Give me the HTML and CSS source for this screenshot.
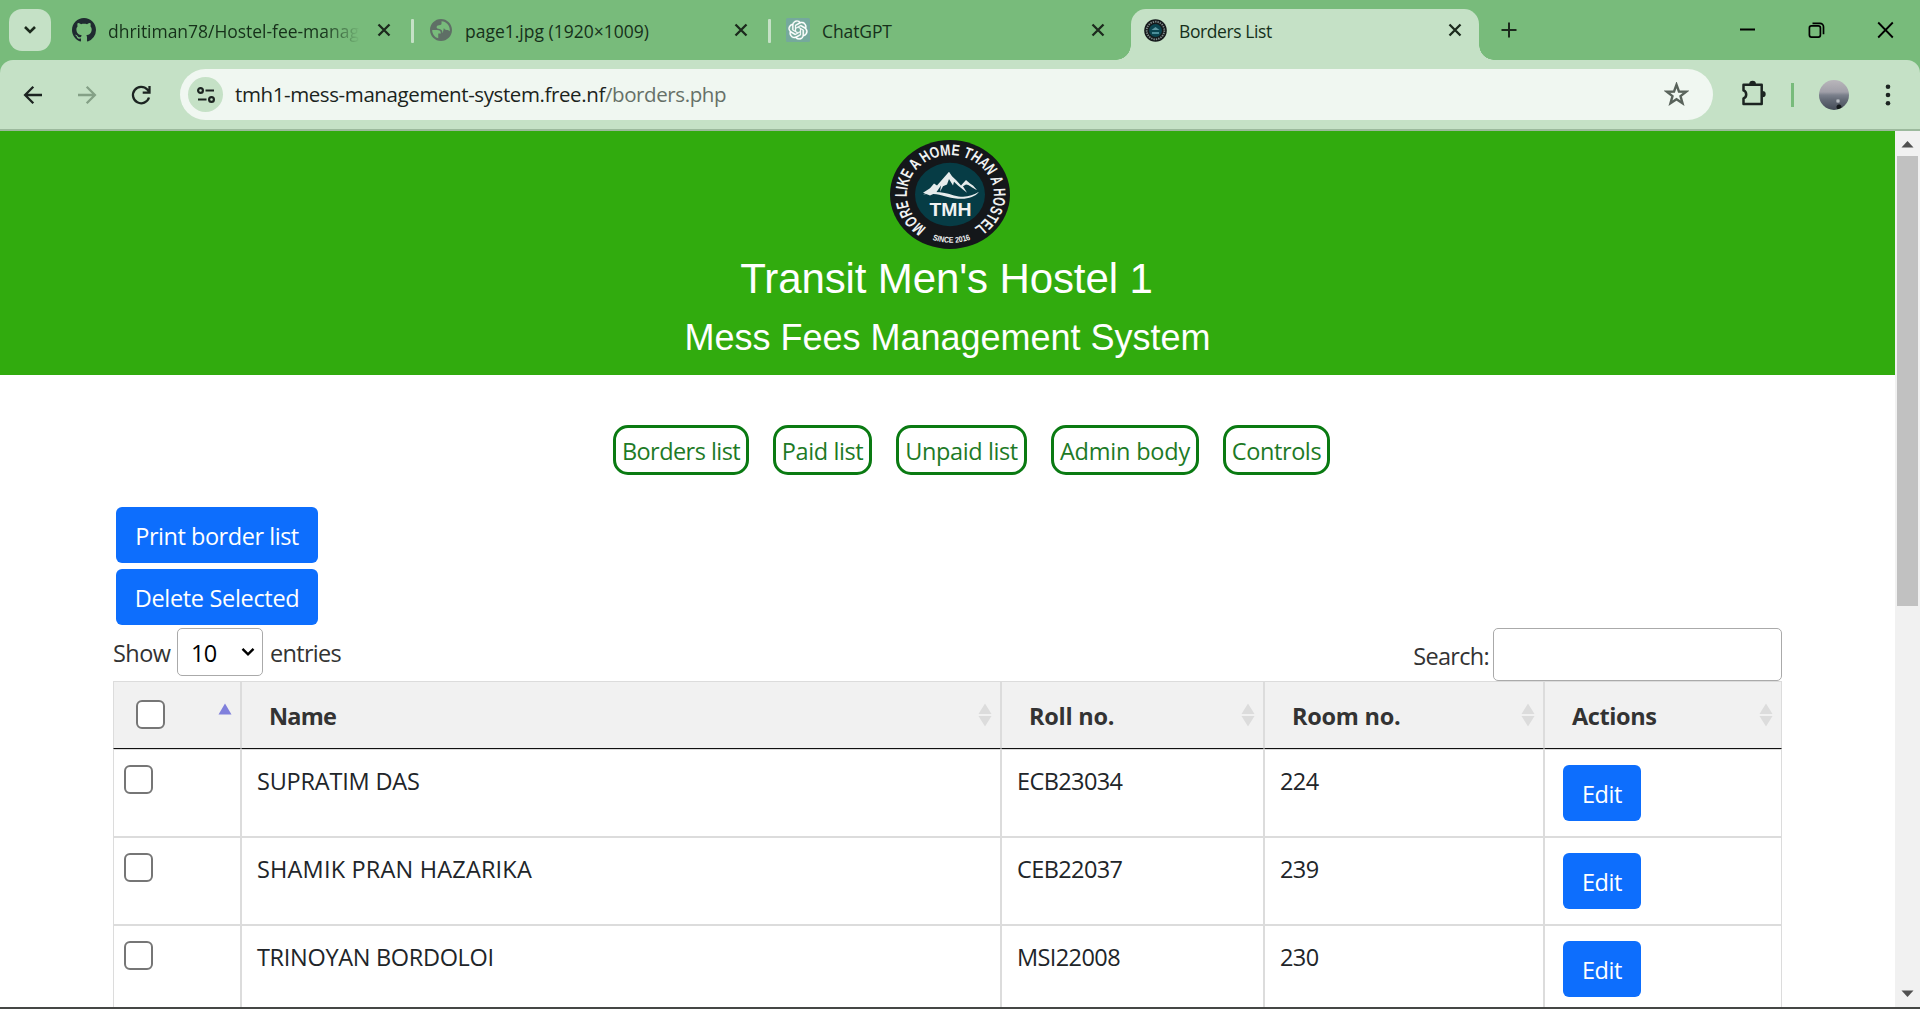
FILE: index.html
```html
<!DOCTYPE html>
<html lang="en">
<head>
<meta charset="utf-8">
<title>Borders List</title>
<link rel="stylesheet" href="styles.css">
</head>
<body>
<svg class="defs" aria-hidden="true">
  <symbol id="x" viewBox="0 0 24 24"><path d="M6.500 6.500l11 11M17.500 6.500l-11 11" fill="none" stroke="currentColor" stroke-width="2.300"/></symbol>
  <symbol id="sort" viewBox="0 0 14 24"><path d="M7 .5L13.500 11H.5zM7 23.500L13.500 13H.5z" fill="#dcdcdc"/></symbol>
</svg>

<header class="strip">
  <button class="tab-search" aria-label="Search tabs"><svg width="14" height="10" viewBox="0 0 14 10"><path d="M2 2l5 5 5-5" fill="none" stroke="#1c2a1d" stroke-width="2.600"/></svg></button>
  <div class="tab tab-github">
    <svg width="24" height="24" viewBox="0 0 16 16"><path fill="#1f2a30" d="M8 0C3.580 0 0 3.580 0 8c0 3.540 2.290 6.530 5.470 7.590.4.070.55-.17.55-.38 0-.19-.01-.82-.01-1.490-2.010.37-2.530-.49-2.690-.94-.09-.23-.48-.94-.82-1.130-.28-.15-.68-.52-.01-.53.63-.01 1.080.58 1.230.82.72 1.210 1.870.87 2.330.66.070-.52.280-.87.510-1.070-1.780-.2-3.640-.89-3.640-3.950 0-.87.310-1.590.820-2.150-.08-.2-.36-1.020.080-2.120 0 0 .67-.21 2.200.820.640-.18 1.320-.27 2-.27s1.360.090 2 .27c1.530-1.040 2.200-.82 2.200-.82.440 1.100.160 1.920.080 2.120.510.560.820 1.270.820 2.150 0 3.070-1.870 3.750-3.650 3.950.290.250.540.730.540 1.480 0 1.070-.01 1.930-.01 2.200 0 .210.150.460.550.380A8.010 8.010 0 0 0 16 8c0-4.420-3.580-8-8-8z"/></svg>
    <span class="tab-title faded">dhritiman78/Hostel-fee-manag</span>
    <svg class="close"><use href="#x"/></svg>
  </div>
  <i class="sep"></i>
  <div class="tab tab-image">
    <svg width="22" height="22" viewBox="2 2 20 20"><path fill="#5f6f66" d="M12 2C6.480 2 2 6.480 2 12s4.480 10 10 10 10-4.480 10-10S17.520 2 12 2zM4 12h4.400c2.300 0 3.400.9 3.500 3.100H9.500v4.500C6.200 18.600 4 15.600 4 12zm8.500 7.900c.4-1 .8-1.700 1.800-1.900.9-.2 1.200-.9 1-1.800-.2-1-.9-1.700-2-1.700 0-2-.8-3.300-2.700-3.500-1.400-.2-2.600-.1-2.600-1.400 0-1.200.8-1.900 2.200-1.900 1.500 0 2.300-.5 2.300-1.800V4.100C16.800 4.300 20 7.800 20 12c0 .4 0 .8-.1 1.200-.8-.9-1.600-1.300-2.700-1.300-1.300 0-2-.6-2.600-1.700"/></svg>
    <span class="tab-title">page1.jpg (1920×1009)</span>
    <svg class="close"><use href="#x"/></svg>
  </div>
  <i class="sep"></i>
  <div class="tab tab-chat">
    <svg width="24" height="24" viewBox="-3 -3 30 30"><rect x="-3" y="-3" width="30" height="30" rx="2" fill="#75a99c"/><path fill="#fff" stroke="#fff" stroke-width=".4" d="M22.2819 9.8211a5.9847 5.9847 0 0 0-.5157-4.9108 6.0462 6.0462 0 0 0-6.5098-2.9A6.0651 6.0651 0 0 0 4.9807 4.1818a5.9847 5.9847 0 0 0-3.9977 2.9 6.0462 6.0462 0 0 0 .7427 7.0966 5.98 5.98 0 0 0 .511 4.9107 6.051 6.051 0 0 0 6.5146 2.9001A5.9847 5.9847 0 0 0 13.2599 24a6.0557 6.0557 0 0 0 5.7718-4.2058 5.9894 5.9894 0 0 0 3.9977-2.9001 6.0557 6.0557 0 0 0-.7475-7.0729zm-9.022 12.6081a4.4755 4.4755 0 0 1-2.8764-1.0408l.1419-.0804 4.7783-2.7582a.7948.7948 0 0 0 .3927-.6813v-6.7369l2.02 1.1686a.071.071 0 0 1 .038.052v5.5826a4.504 4.504 0 0 1-4.4945 4.4944zm-9.6607-4.1254a4.4708 4.4708 0 0 1-.5346-3.0137l.142.0852 4.783 2.7582a.7712.7712 0 0 0 .7806 0l5.8428-3.3685v2.3324a.0804.0804 0 0 1-.0332.0615L9.74 19.9502a4.4992 4.4992 0 0 1-6.1408-1.6464zM2.3408 7.8956a4.485 4.485 0 0 1 2.3655-1.9728V11.6a.7664.7664 0 0 0 .3879.6765l5.8144 3.3543-2.0201 1.1685a.0757.0757 0 0 1-.071 0l-4.8303-2.7865A4.504 4.504 0 0 1 2.3408 7.872zm16.5963 3.8558L13.1038 8.364 15.1192 7.2a.0757.0757 0 0 1 .071 0l4.8303 2.7913a4.4944 4.4944 0 0 1-.6765 8.1042v-5.6772a.79.79 0 0 0-.407-.667zm2.0107-3.0231l-.142-.0852-4.7735-2.7818a.7759.7759 0 0 0-.7854 0L9.409 9.2297V6.8974a.0662.0662 0 0 1 .0284-.0615l4.8303-2.7866a4.4992 4.4992 0 0 1 6.6802 4.66zM8.3065 12.863l-2.02-1.1638a.0804.0804 0 0 1-.038-.0567V6.0742a4.4992 4.4992 0 0 1 7.3757-3.4537l-.142.0805L8.704 5.459a.7948.7948 0 0 0-.3927.6813zm1.0976-2.3654l2.602-1.4998 2.6069 1.4998v2.9994l-2.5974 1.4997-2.6067-1.4997Z"/></svg>
    <span class="tab-title">ChatGPT</span>
    <svg class="close"><use href="#x"/></svg>
  </div>
  <div class="tab tab-active">
    <svg width="23" height="23" viewBox="0 0 23 23"><circle cx="11.500" cy="11.500" r="11.300" fill="#15191b"/><circle cx="11.500" cy="11.500" r="8.800" fill="none" stroke="#7f8a8a" stroke-width="1.800" stroke-dasharray="1.400 1"/><circle cx="11.500" cy="11.500" r="6.500" fill="#0b4550"/><path d="M7.500 11l4-3 4 3z" fill="#5d98a2"/><path d="M8 14h7" stroke="#4b8d99" stroke-width="2"/></svg>
    <span class="tab-title">Borders List</span>
    <svg class="close"><use href="#x"/></svg>
  </div>
  <svg class="new-tab" width="24" height="24" viewBox="0 0 24 24"><path d="M12 4.500v15M4.500 12h15" stroke="#1c2a1d" stroke-width="2"/></svg>
  <div class="win">
    <svg viewBox="0 0 24 24"><path d="M4.500 11.500h15" stroke="#000" stroke-width="2"/></svg>
    <svg viewBox="0 0 24 24"><g fill="none" stroke="#000" stroke-width="1.700"><rect x="4.900" y="7.900" width="11" height="11.200" rx="2"/><path d="M8 5.300h7.500a3.500 3.500 0 0 1 3.500 3.500v7.500"/></g></svg>
    <svg viewBox="0 0 24 24"><path d="M4.700 4.500l14.600 15M19.300 4.500l-14.600 15" stroke="#000" stroke-width="1.800"/></svg>
  </div>
</header>

<div class="toolbar-bg">
<nav class="toolbar">
  <svg class="back" viewBox="0 0 24 24"><path d="M21 12H4.500M12.300 3.800L4.100 12l8.200 8.200" fill="none" stroke="#1c2421" stroke-width="2.300"/></svg>
  <svg class="forward" viewBox="0 0 24 24"><path d="M3 12h16.500M11.700 3.800l8.200 8.200-8.200 8.200" fill="none" stroke="#84a086" stroke-width="2.300"/></svg>
  <svg class="reload" viewBox="0 0 24 24"><path d="M20 14.500A8.200 8.200 0 1 1 18.300 6.600l2 2.200M20.500 3v6.700h-6.800" fill="none" stroke="#1c2421" stroke-width="2.300"/></svg>
  <div class="omnibox">
    <span class="site"><svg width="20" height="20" viewBox="0 0 20 20"><g fill="none" stroke="#1c2421" stroke-width="2.200"><circle cx="4.500" cy="5.500" r="2.400"/><path d="M9.500 5.500H18M2 14.500h8.500"/><circle cx="15.500" cy="14.500" r="2.400"/></g></svg></span>
    <span class="url">tmh1-mess-management-system.free.nf<em>/borders.php</em></span>
    <svg class="star" viewBox="0 0 24 24"><path d="M12 2.600l2.350 6.500 6.900.2-5.400 4.300 1.900 6.700L12 16.450 6.250 20.300l1.900-6.700-5.400-4.300 6.900-.2z" fill="none" stroke="#59635b" stroke-width="2.300"/></svg>
  </div>
  <svg class="ext" width="27" height="27" viewBox="0 0 27 27"><path d="M3.500 5.800h18.200v19.100H3.500v-5.500c3.600-1.500 3.600-6.500 0-8z" fill="none" stroke="#1c2421" stroke-width="2.500" stroke-linejoin="round"/><path d="M9.300 5a3.300 3.300 0 0 1 6.600 0zM22.500 11.900a3.200 3.200 0 0 1 0 6.400z" fill="#1c2421"/></svg>
  <i class="tool-sep"></i>
  <span class="avatar"></span>
  <svg class="dots" width="6" height="22" viewBox="0 0 6 22"><g fill="#1c2421"><circle cx="3" cy="2.700" r="2.300"/><circle cx="3" cy="11" r="2.300"/><circle cx="3" cy="19.300" r="2.300"/></g></svg>
</nav>
</div>

<div class="view">
  <main class="page">
    <section class="banner">
      <svg class="logo" width="120" height="109" viewBox="0 0 120 120" preserveAspectRatio="none">
        <defs>
          <path id="ring" d="M36.500 96.500A43.400 43.400 0 1 1 82.500 97.500"/>
          <path id="foot" d="M40.500 109A53.500 53.500 0 0 0 83 108.500"/>
        </defs>
        <circle cx="60" cy="60" r="60" fill="#14171a"/>
        <circle cx="60" cy="60" r="35" fill="#063c45"/>
        <text class="ring-text"><textPath href="#ring" textLength="222" lengthAdjust="spacingAndGlyphs">MORE LIKE A HOME THAN A HOSTEL</textPath></text>
        <text class="foot-text"><textPath href="#foot" startOffset="2" textLength="39" lengthAdjust="spacingAndGlyphs">SINCE 2016</textPath></text>
        <path fill="#e6ecec" d="M33 58l7-5 4-5 3 2 12-15 3 5 4 4 5 6 5-6 4 4 3 2 4 5c-5-2-8-6-11-6l-3 2 4 7-9-8-4-4-1 4-4-7-2 6-4 2-3 6 1-7-5 8-6 3z"/>
        <path fill="#e6ecec" d="M33 60c11-5 21-2 31 1s18 1 25-4c-5 7-14 9-25 7s-19-7-31-4z"/>
        <text class="tmh" x="39.500" y="84" textLength="42" lengthAdjust="spacingAndGlyphs">TMH</text>
      </svg>
      <h1>Transit Men's Hostel 1</h1>
      <h2>Mess Fees Management System</h2>
    </section>

    <nav class="links">
      <a>Borders list</a><a>Paid list</a><a>Unpaid list</a><a>Admin body</a><a>Controls</a>
    </nav>

    <section class="content">
      <div class="actions">
        <button class="btn">Print border list</button>
        <button class="btn delete">Delete Selected</button>
      </div>
      <div class="controls">
        <div class="length"><span>Show</span><span class="select">10<svg width="14" height="10" viewBox="0 0 14 10"><path d="M1.500 1.800L7 7.300l5.500-5.500" fill="none" stroke="#000" stroke-width="2.400"/></svg></span><span>entries</span></div>
        <label class="filter"><span>Search:</span><input type="text"></label>
      </div>
      <table>
        <colgroup><col class="c1"><col class="c2"><col class="c3"><col class="c4"><col class="c5"></colgroup>
        <thead>
          <tr>
            <th><div class="head"><i class="check"></i><svg class="asc" width="14" height="12" viewBox="0 0 14 12"><path d="M7 .5L13.500 11.500H.5z" fill="#8080dc"/></svg></div></th>
            <th><div class="head"><span class="name-h">Name</span><svg class="sort"><use href="#sort"/></svg></div></th>
            <th><div class="head"><span>Roll no.</span><svg class="sort"><use href="#sort"/></svg></div></th>
            <th><div class="head"><span>Room no.</span><svg class="sort"><use href="#sort"/></svg></div></th>
            <th><div class="head"><span class="act-h">Actions</span><svg class="sort"><use href="#sort"/></svg></div></th>
          </tr>
        </thead>
        <tbody>
          <tr><td><i class="check"></i></td><td>SUPRATIM DAS</td><td>ECB23034</td><td>224</td><td><button class="btn edit">Edit</button></td></tr>
          <tr><td><i class="check"></i></td><td class="wide">SHAMIK PRAN HAZARIKA</td><td>CEB22037</td><td>239</td><td><button class="btn edit">Edit</button></td></tr>
          <tr><td><i class="check"></i></td><td class="tight">TRINOYAN BORDOLOI</td><td>MSI22008</td><td>230</td><td><button class="btn edit">Edit</button></td></tr>
        </tbody>
      </table>
    </section>
  </main>
  <aside class="scroll">
    <svg width="17" height="10" viewBox="0 0 17 10"><path d="M2.500 8.500L8.500 2l6 6.500z" fill="#505050"/></svg>
    <i class="thumb"></i>
    <svg class="down" width="17" height="10" viewBox="0 0 17 10"><path d="M2.500 1.500h12l-6 6.500z" fill="#505050"/></svg>
  </aside>
</div>
</body>
</html>
```
FILE: styles.css
```css
* { box-sizing: border-box; }
body {
  margin: 0;
  width: 1920px;
  height: 1009px;
  overflow: hidden;
  display: flex;
  flex-direction: column;
  background: #78bb7b;
  font-family: "Open Sans", "Noto Sans", sans-serif;
}
svg { display: block; flex: none; }
button { font: inherit; border: 0; padding: 0; }
.defs { position: absolute; width: 0; height: 0; }

/* tab strip */
.strip { height: 60px; flex: none; display: flex; align-items: flex-start; padding-left: 9px; }
.tab-search {
  width: 42px; height: 42px; margin: 9px 9px 0 0; border-radius: 13px;
  background: #c5e1c6; display: flex; align-items: center; justify-content: center;
}
.tab { height: 60px; display: flex; align-items: center; }
.tab > svg { color: #1c2a1d; }
.tab-title {
  flex: 1; white-space: nowrap;
  font-size: 17.5px; line-height: 26px; color: #16301a; padding-top: 2px;
}
.close { width: 24px; height: 24px; }
.tab-github { width: 351px; padding: 0 15px 0 12px; }
.tab-github .tab-title { margin: 0 12px 0 12px; letter-spacing: -.03px; }
.faded { -webkit-mask-image: linear-gradient(90deg, #000 215px, transparent 252px); mask-image: linear-gradient(90deg, #000 215px, transparent 252px); }
.tab-image { width: 354px; padding: 0 15px 0 16px; }
.tab-image .tab-title { margin-left: 13px; }
.tab-chat { width: 360px; padding: 0 21px 0 15px; }
.tab-chat .tab-title { margin-left: 12px; letter-spacing: -.1px; }
.tab-active {
  position: relative; width: 348px; height: 51px; margin-top: 9px; padding: 0 12px 9px 13px;
  background: #c5e1c6; border-radius: 15px 15px 0 0;
}
.tab-active .tab-title { margin-left: 12px; letter-spacing: -.4px; }
.tab-active::before, .tab-active::after {
  content: ""; position: absolute; bottom: 0; width: 15px; height: 15px;
}
.tab-active::before { left: -15px; background: radial-gradient(circle at 0 0, transparent 14.5px, #c5e1c6 15px); }
.tab-active::after { right: -15px; background: radial-gradient(circle at 100% 0, transparent 14.5px, #c5e1c6 15px); }
.sep { width: 3px; height: 24px; margin-top: 19px; background: #c5e1c6; border-radius: 1px; }
.new-tab { margin: 18px 0 0 18px; }
.win { margin-left: auto; display: flex; }
.win svg { width: 69px; height: 24px; margin-top: 17.500px; }

/* toolbar */
.toolbar-bg { flex: none; height: 71px; background: #78bb7b; border-bottom: 2px solid #9cb99d; }
.toolbar {
  height: 69px; display: flex; align-items: center; padding-left: 21px;
  background: #c5e1c6; border-radius: 13px 13px 0 0;
}
.back, .forward, .reload { width: 24px; height: 24px; }
.forward { margin-left: 30px; }
.reload { margin-left: 30px; }
.omnibox {
  width: 1533px; height: 51px; margin-left: 27px; padding: 0 24px 0 8px;
  border-radius: 26px; background: #f0f7f1; display: flex; align-items: center;
}
.site { width: 35px; height: 35px; border-radius: 50%; background: #c5e1c6; display: flex; align-items: center; justify-content: center; }
.url { flex: 1; margin-left: 12px; font-size: 20.5px; letter-spacing: -.4px; line-height: 30px; padding-bottom: 1px; color: #1b241d; }
.url em { font-style: normal; color: #667068; }
.star { width: 25px; height: 25px; }
.ext { margin: 0 0 4px 27px; }
.tool-sep { width: 3px; height: 24px; margin-left: 24px; background: #78bb7b; }
.avatar {
  width: 30px; height: 30px; margin-left: 25px; border-radius: 50%;
  background:
    radial-gradient(circle at 20px 27px, #14181c 0 2px, transparent 3px),
    radial-gradient(circle at 19px 21px, #b9bdc4 0 1px, transparent 2.500px),
    linear-gradient(#b9b6bb 0, #a09fa8 40%, #7b808c 50%, #666c78 65%, #454c58 100%);
}
.dots { margin-left: 36px; }

/* page */
.view { flex: 1; min-height: 0; display: flex; background: #fff; border-bottom: 2px solid #454745; }
.page { width: 1895px; overflow: hidden; }
.banner {
  height: 244px; background: #31ab0e; color: #fff; display: flex; flex-direction: column; align-items: center;
  font-family: "Liberation Sans", Arial, sans-serif;
}
.logo { margin: 9px 0 0 5px; }
.ring-text, .foot-text, .tmh { fill: #f0f2f2; font-family: "Liberation Sans", Arial, sans-serif; font-weight: 700; }
.ring-text { font-size: 17px; }
.foot-text { font-size: 9px; }
.tmh { font-size: 20px; }
h1, h2 { margin: 0; font-weight: 400; }
h1 { font-size: 42px; line-height: 50px; margin: 5px 2px 0 0; letter-spacing: -.12px; }
h2 { font-size: 36px; line-height: 44px; margin-top: 12px; }

.links { display: flex; gap: 24px; padding: 50px 0 0 613px; }
.links a {
  height: 50px; border: 3px solid #0a7a12; border-radius: 15px; padding-top: 1px;
  display: flex; justify-content: center; color: #1d7a26;
  font-size: 23.500px; line-height: 45px; letter-spacing: -.4px; white-space: nowrap;
}
.links a:nth-child(1) { width: 136px; letter-spacing: -.55px; }
.links a:nth-child(2) { width: 99px; }
.links a:nth-child(3) { width: 131px; }
.links a:nth-child(4) { width: 148px; letter-spacing: -.2px; }
.links a:nth-child(5) { width: 107px; }

.content { width: 1669px; margin: 32px 0 0 113px; color: #333; }
.actions { display: flex; flex-direction: column; gap: 6px; padding-left: 3px; }
.btn {
  width: 202px; height: 56px; border-radius: 6px; padding-top: 2px;
  background: #0d6efd; color: #fff; font-size: 23.500px; line-height: 54px; letter-spacing: -.46px;
}
.delete { letter-spacing: -.32px; }
.edit { width: 78px; letter-spacing: -.4px; display: block; }

.controls { height: 56px; padding-top: 3px; display: flex; justify-content: space-between; font-size: 23.500px; letter-spacing: -.7px; }
.length { display: flex; line-height: 51px; }
.select {
  width: 86px; height: 48px; margin: 0 7px 0 6px; padding: 2px 7px 0 13px; border: 1px solid #aaa; border-radius: 5px;
  display: flex; align-items: center; justify-content: space-between; color: #000;
}
.select svg { margin-bottom: 2px; }
.length > span:first-child { width: 58px; letter-spacing: -.55px; }
.filter { display: flex; line-height: 57px; }
.filter input { width: 289px; height: 53px; margin-left: 4px; border: 1px solid #aaa; border-radius: 5px; background: #fff; }

table { width: 1669px; table-layout: fixed; border-collapse: separate; border-spacing: 0; }
.c1 { width: 128px; }
.c2 { width: 760px; }
.c3 { width: 263px; }
.c4 { width: 280px; }
.c5 { width: 238px; }
th, td { border: 1px solid #dcdcdc; padding: 0; vertical-align: top; text-align: left; }
th { height: 68px; background: #f1f1f1; border-bottom-color: #111; }
.head { display: flex; justify-content: space-between; padding: 18px 8px 0 27px; font-size: 23.500px; line-height: 32px; letter-spacing: -.25px; }
.name-h { letter-spacing: -.8px; }
.act-h { letter-spacing: -.4px; }
.head .check { margin: 0 0 0 -5px; }
.sort { width: 14px; height: 24px; margin-top: 3px; }
.asc { margin-top: 3px; }
td { height: 88px; padding: 15px 0 0 15px; font-size: 23.500px; line-height: 32px; letter-spacing: -.6px; color: #212529; }
td:first-child { padding-left: 10px; }
td:nth-child(2) { letter-spacing: -.2px; }
td.wide:nth-child(2) { letter-spacing: .18px; }
td.tight:nth-child(2) { letter-spacing: -.32px; }
td:last-child { padding-left: 18px; }
.check { display: block; width: 29px; height: 29px; border: 2px solid #767676; border-radius: 6px; background: #fff; }

.scroll { width: 25px; background: #f1f1f1; display: flex; flex-direction: column; align-items: center; padding: 8px 0; }
.thumb { width: 21px; height: 450px; margin: 7px 0 auto; background: #c1c1c1; }
```
